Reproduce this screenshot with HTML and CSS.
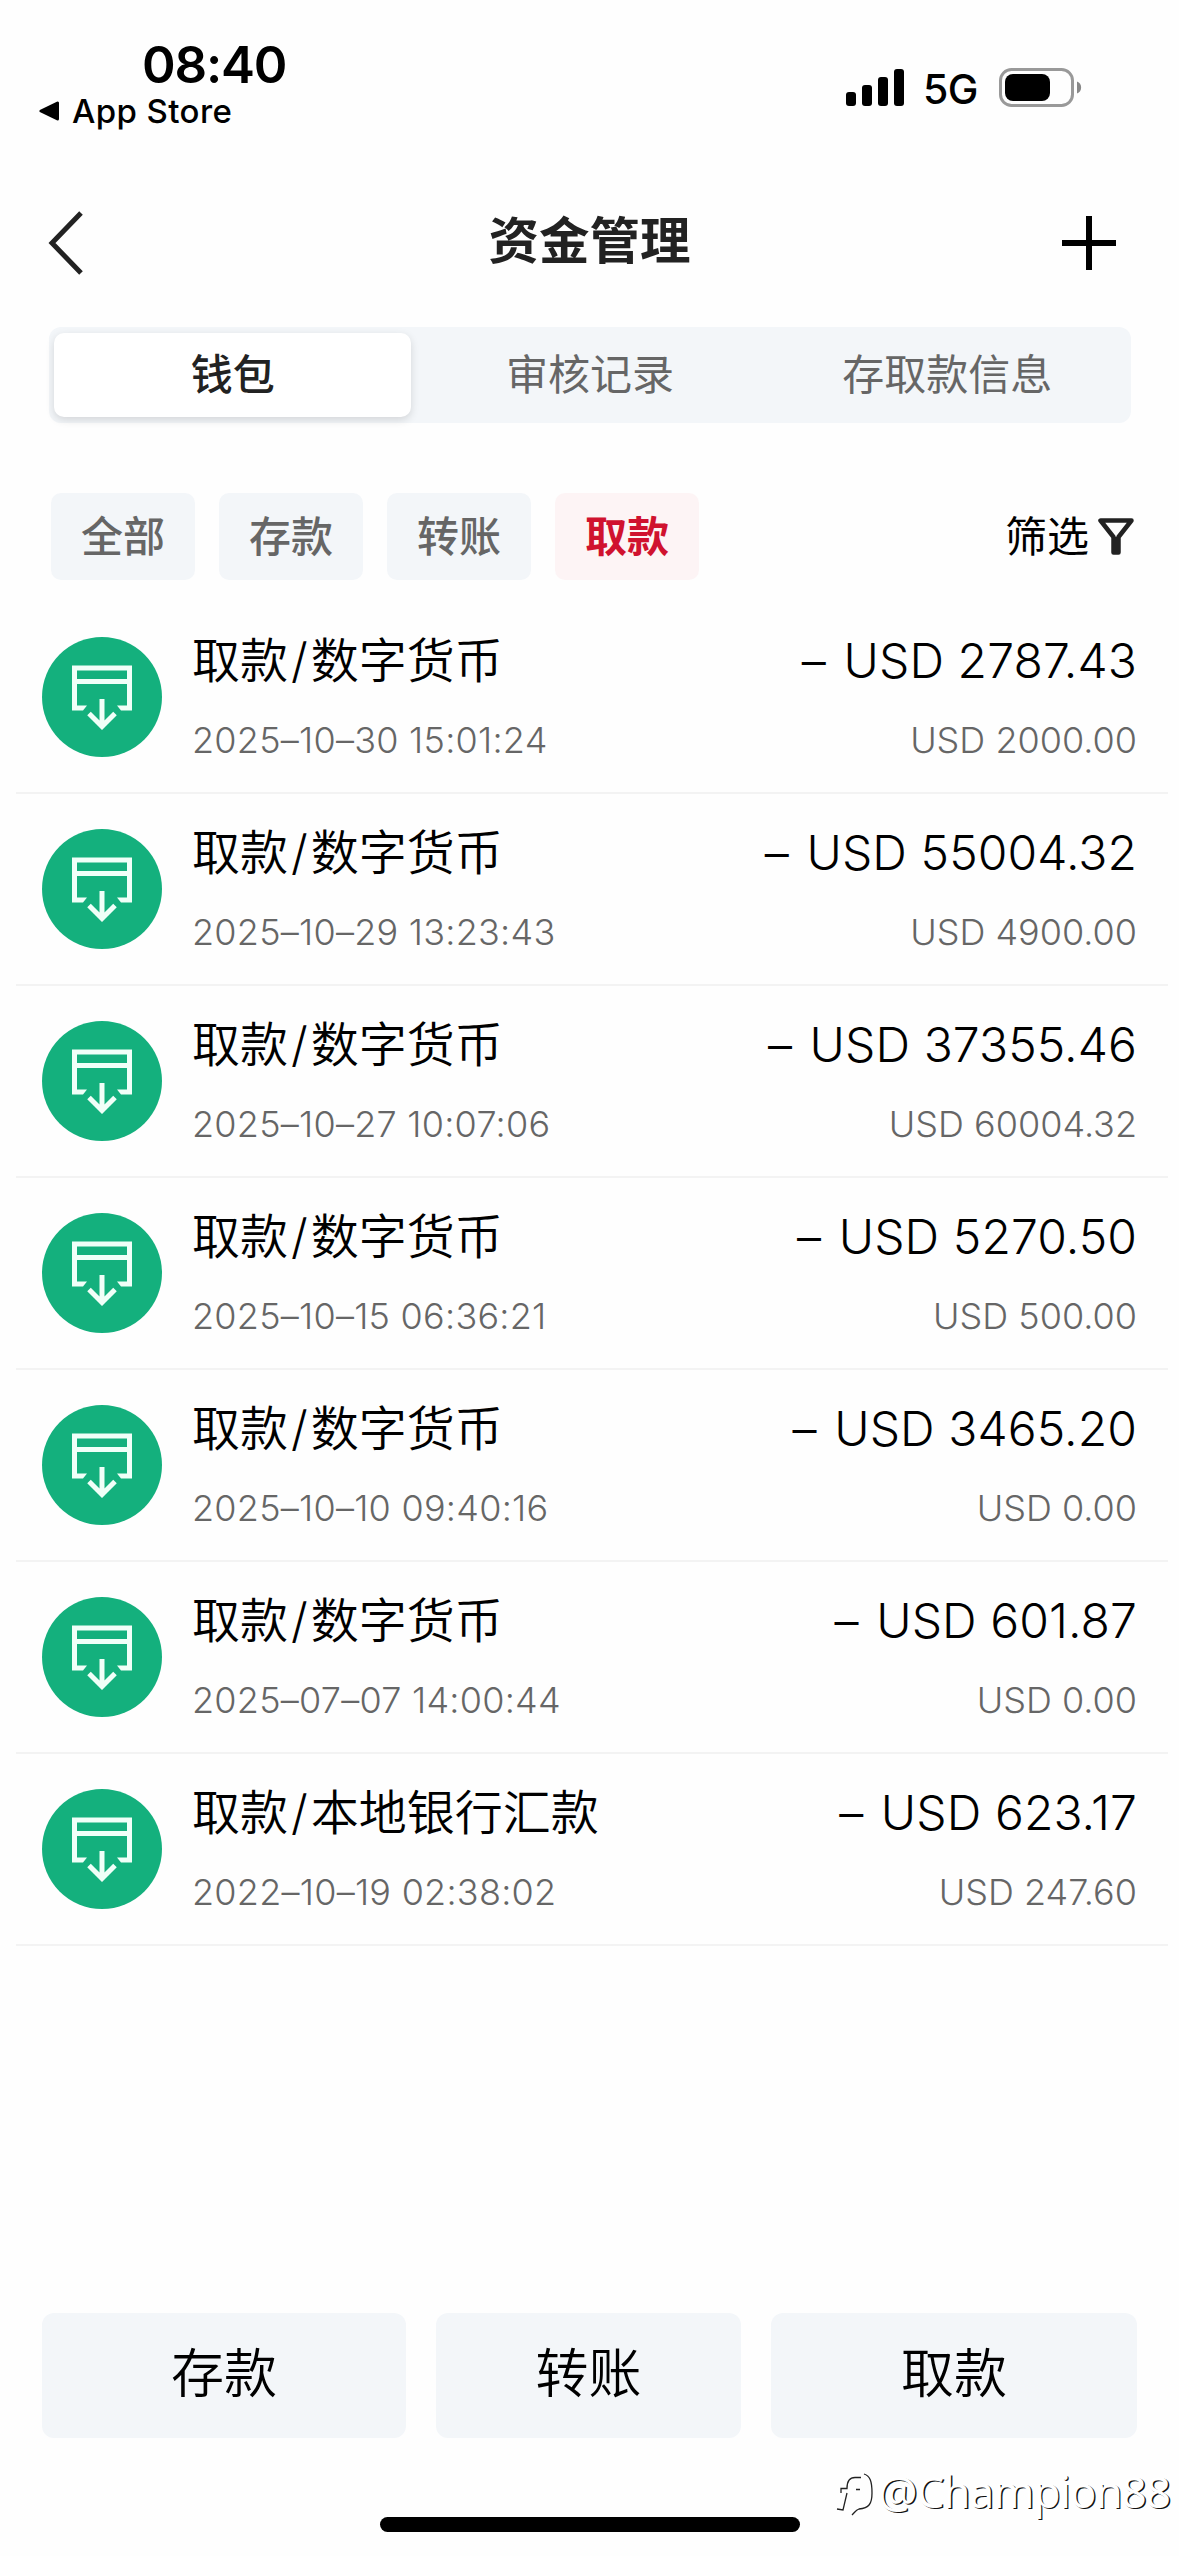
FILE: index.html
```html
<!DOCTYPE html>
<html lang="zh-CN">
<head>
<meta charset="utf-8">
<title>资金管理</title>
<link rel="stylesheet" href="styles.css">
</head>
<body>
<svg width="0" height="0" class="defs" aria-hidden="true">
  <symbol id="withdraw" viewBox="0 0 120 120">
    <circle cx="60" cy="60" r="60" fill="#14b07d"/>
    <path d="M32.500 69V31H87.500V69M30 44.500H90M60 62V89M47 76.500L60 89.500L73 76.500" fill="none" stroke="#f0fff8" stroke-width="5"/>
    <path d="M30 68.500H45L41 73.500H30ZM90 68.500H75L79 73.500H90Z" fill="#f0fff8"/>
  </symbol>
</svg>
<div class="screen">
  <header class="status">
    <div class="status-left">
      <div class="time">08:40</div>
      <div class="return"><svg width="20" height="20" viewBox="0 0 20 20"><path d="M2 10L18.500 2V18Z" stroke="#000" stroke-width="3" stroke-linejoin="round"/></svg><span>App Store</span></div>
    </div>
    <div class="status-right">
      <svg width="58" height="37" viewBox="0 0 58 37"><rect y="23" width="10" height="14" rx="3"/><rect x="16" y="16" width="10" height="21" rx="3"/><rect x="32" y="8" width="10" height="29" rx="3"/><rect x="48" width="10" height="37" rx="3"/></svg>
      <span class="network">5G</span>
      <svg width="84" height="39" viewBox="0 0 84 39"><rect x="1.500" y="1.500" width="72" height="36" rx="11" fill="none" stroke="#999" stroke-width="3"/><rect x="6" y="6" width="45" height="27" rx="8"/><path d="M78 13.500C83.500 15 83.500 24 78 25.500Z" fill="#888"/></svg>
    </div>
  </header>
  <nav class="titlebar">
    <svg width="36" height="64" viewBox="0 0 36 64"><path d="M33 2L4 32L33 62" fill="none" stroke="#222" stroke-width="5"/></svg>
    <h1>资金管理</h1>
    <svg width="54" height="54" viewBox="0 0 54 54"><path d="M27 0V54M0 27H54" stroke="#000" stroke-width="6"/></svg>
  </nav>
  <div class="tabs"><div class="tab active">钱包</div><div class="tab">审核记录</div><div class="tab">存取款信息</div></div>
  <div class="filters">
    <div class="chip">全部</div><div class="chip">存款</div><div class="chip">转账</div><div class="chip selected">取款</div>
    <div class="filter"><span class="filter-label">筛选</span><svg width="36" height="37" viewBox="0 0 36 37"><path d="M2.500 2.500H33.500L20.500 19V34.500H15.500V19Z" fill="none" stroke="#222" stroke-width="4.500" stroke-linejoin="round"/><path d="M15 19H21V34H15Z" fill="#222"/></svg></div>
  </div>
  <main class="list">
    <div class="row"><svg class="icon"><use href="#withdraw"/></svg><div class="info"><div class="name">取款<span class="slash">/</span>数字货币</div><div class="date">2025–10–30 15:01:24</div></div><div class="money"><div class="amount"><span class="minus">–</span> USD 2787.43</div><div class="sub">USD 2000.00</div></div></div>
    <div class="row"><svg class="icon"><use href="#withdraw"/></svg><div class="info"><div class="name">取款<span class="slash">/</span>数字货币</div><div class="date">2025–10–29 13:23:43</div></div><div class="money"><div class="amount"><span class="minus">–</span> USD 55004.32</div><div class="sub">USD 4900.00</div></div></div>
    <div class="row"><svg class="icon"><use href="#withdraw"/></svg><div class="info"><div class="name">取款<span class="slash">/</span>数字货币</div><div class="date">2025–10–27 10:07:06</div></div><div class="money"><div class="amount"><span class="minus">–</span> USD 37355.46</div><div class="sub">USD 60004.32</div></div></div>
    <div class="row"><svg class="icon"><use href="#withdraw"/></svg><div class="info"><div class="name">取款<span class="slash">/</span>数字货币</div><div class="date">2025–10–15 06:36:21</div></div><div class="money"><div class="amount"><span class="minus">–</span> USD 5270.50</div><div class="sub">USD 500.00</div></div></div>
    <div class="row"><svg class="icon"><use href="#withdraw"/></svg><div class="info"><div class="name">取款<span class="slash">/</span>数字货币</div><div class="date">2025–10–10 09:40:16</div></div><div class="money"><div class="amount"><span class="minus">–</span> USD 3465.20</div><div class="sub">USD 0.00</div></div></div>
    <div class="row"><svg class="icon"><use href="#withdraw"/></svg><div class="info"><div class="name">取款<span class="slash">/</span>数字货币</div><div class="date">2025–07–07 14:00:44</div></div><div class="money"><div class="amount"><span class="minus">–</span> USD 601.87</div><div class="sub">USD 0.00</div></div></div>
    <div class="row"><svg class="icon"><use href="#withdraw"/></svg><div class="info"><div class="name">取款<span class="slash">/</span>本地银行汇款</div><div class="date">2022–10–19 02:38:02</div></div><div class="money"><div class="amount"><span class="minus">–</span> USD 623.17</div><div class="sub">USD 247.60</div></div></div>
  </main>
  <footer class="actions"><div class="action">存款</div><div class="action">转账</div><div class="action">取款</div></footer>
  <div class="home"></div>
  <div class="watermark"><svg width="42" height="46" viewBox="0 0 42 46"><path d="M1 36L7 37L11 20M5 20V15.500H11C11 8 14 4.500 19 4.500H25M28 1C34 3 36 8 36 20C36 31 33 35 23 36C20 37 19 39 16 42M20 16.500H24" fill="none" stroke="#222" stroke-width="1.300"/></svg><span class="handle">@Champion88</span></div>
</div>
</body>
</html>
```
FILE: styles.css
```css
* { box-sizing: border-box; }
body { margin: 0; background: #fefefe; color: #000; font-family: Inter, "Noto Sans CJK SC", sans-serif; }
svg { display: block; flex: none; }
.defs { position: absolute; }
.screen { position: relative; width: 1179px; height: 2556px; overflow: hidden; display: flex; flex-direction: column; }
.status { height: 195px; flex: none; display: flex; justify-content: space-between; padding: 36px 96px 0 39px; }
.time { margin-left: 103px; height: 58px; line-height: 58px; font-size: 51px; font-weight: 600; letter-spacing: -1.2px; white-space: nowrap; }
.return { display: flex; align-items: center; height: 34px; gap: 13px; font-size: 33px; font-weight: 500; letter-spacing: 0.4px; line-height: 32px; white-space: nowrap; }
.status-right { display: flex; height: 39px; margin-top: 32px; align-items: center; }
.network { width: 54px; margin: 4px 22px 0 19px; font-size: 41px; font-weight: 500; line-height: 39px; letter-spacing: -0.6px; }
.titlebar { height: 96px; flex: none; display: grid; grid-template-columns: 1fr auto 1fr; align-items: center; padding: 0 63px 0 48px; }
.titlebar svg:last-child { justify-self: end; }
h1 { margin: 0; padding: 0 0 4px 15px; font-size: 50.5px; line-height: 60px; font-weight: 600; color: #222; }
.tabs { display: flex; flex: none; height: 96px; margin: 36px 48px 0 49px; padding: 6px 5px; border-radius: 12px; background: #f3f6f9; font-size: 42px; color: #666; }
.tab { flex: 1; display: flex; align-items: center; justify-content: center; height: 84px; padding-bottom: 7px; }
.active { background: #fff; color: #222; border-radius: 10px; font-weight: 500; box-shadow: 0 3px 8px #0002; }
.filters { display: flex; flex: none; gap: 24px; height: 87px; margin: 70px 45px 0 51px; font-size: 42px; }
.chip { width: 144px; display: flex; align-items: center; justify-content: center; padding-bottom: 7px; border-radius: 10px; background: #f3f6f9; color: #666; font-weight: 500; }
.selected { background: #fdf4f5; color: #d0122f; font-weight: 700; }
.filter { margin-left: auto; display: flex; align-items: center; gap: 9px; }
.filter-label { padding-bottom: 7px; }
.list { flex: none; margin: 22px 11px 0 16px; }
.row { height: 192px; display: flex; border-bottom: 2px solid #f3f3f3; padding: 35px 31px 0 26px; }
.icon { width: 120px; height: 120px; }
.info { margin-left: 30px; flex: 1; }
.name { height: 48px; line-height: 48px; font-size: 48px; font-weight: 350; white-space: nowrap; }
.slash { padding: 0 3px; }
.date, .sub { margin-top: 32px; height: 46px; line-height: 46px; font-size: 36px; font-weight: 300; color: #666; white-space: nowrap; }
.date { letter-spacing: 0.25px; }
.money { text-align: right; }
.amount { height: 48px; line-height: 48px; font-size: 48px; font-weight: 300; letter-spacing: 0.1px; white-space: nowrap; }
.minus { margin-right: 4px; }
.actions { flex: none; height: 125px; margin: 367px 42px 0; display: grid; grid-template-columns: 364px 305px 366px; gap: 30px; }
.action { display: flex; align-items: center; justify-content: center; padding-bottom: 12px; border-radius: 12px; background: #f3f6f9; font-size: 53px; font-weight: 350; }
.home { flex: none; width: 420px; height: 15px; margin: 79px 0 0 380px; border-radius: 8px; background: #000; }
.watermark { position: absolute; left: 836px; top: 2473px; display: flex; align-items: flex-start; font-family: "Noto Sans", sans-serif; font-size: 44px; line-height: 36px; letter-spacing: -1px; color: #fff; text-shadow: 1.4px 1.4px 0 #111; white-space: nowrap; }
```
